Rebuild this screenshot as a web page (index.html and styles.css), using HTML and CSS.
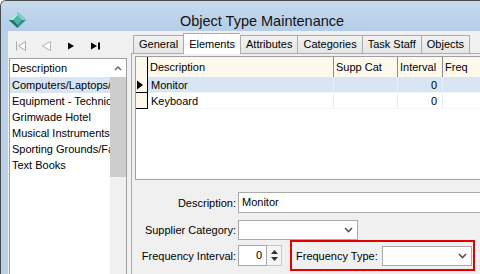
FILE: index.html
```html
<!DOCTYPE html>
<html lang="en">
<head>
  <meta charset="UTF-8" />
  <title>Object Type Maintenance</title>
  <link rel="stylesheet" href="styles.css">
</head>
<body>
  <div class="window">
    <div class="titlebar">
      <svg class="app-icon" width="17" height="16" viewBox="0 0 17 16">
        <polygon points="8.5,0 17,8 8.5,16 0,8" fill="#2e8f8a" />
        <polygon points="8.5,0 17,8 8.5,8" fill="#7fd3cc" />
        <polygon points="8.5,0 0,8 8.5,8" fill="#b6ece6" />
        <polygon points="0,8 8.5,16 8.5,8" fill="#1f6f6b" />
        <polygon points="8.5,3 13,8 8.5,13 4,8" fill="#4fb3ab" />
      </svg>
      <div class="title">Object Type Maintenance</div>
      <div></div>
    </div>

    <div class="client">
      <!-- left: navigator + list -->
      <div class="left">
        <div class="nav">
          <svg class="nav-btn" width="12" height="10" viewBox="0 0 12 10">
            <path d="M1.5 0.5v9" stroke="#a8a8a8" fill="none" />
            <path d="M10.5 0.5L3.5 5l7 4.5z" stroke="#a8a8a8" fill="#fff" />
          </svg>
          <svg class="nav-btn" width="12" height="10" viewBox="0 0 12 10">
            <path d="M10.5 0.5L2.5 5l8 4.5z" stroke="#b4b4b4" fill="#fff" />
          </svg>
          <svg class="nav-btn" width="12" height="10" viewBox="0 0 12 10">
            <path d="M3 1.5L9 5L3 8.5z" fill="#000" />
          </svg>
          <svg class="nav-btn" width="12" height="10" viewBox="0 0 12 10">
            <path d="M1 1.5L7 5L1 8.5z" fill="#000" />
            <rect x="8" y="1.5" width="2" height="7" fill="#000" />
          </svg>
        </div>
        <div class="list">
          <div class="list-items">
            <div class="list-head">Description</div>
            <div class="list-row selected">Computers/Laptops/Tablets</div>
            <div class="list-row">Equipment - Technical</div>
            <div class="list-row">Grimwade Hotel</div>
            <div class="list-row">Musical Instruments</div>
            <div class="list-row">Sporting Grounds/Facilities</div>
            <div class="list-row">Text Books</div>
          </div>
          <div class="vscroll">
            <div class="scroll-up">
              <svg width="8" height="5" viewBox="0 0 8 5"><path d="M1 4L4 1l3 3" stroke="#606060" stroke-width="1.4" fill="none" /></svg>
            </div>
            <div class="scroll-thumb"></div>
          </div>
        </div>
      </div>

      <div class="splitter"></div>

      <!-- right: tabs -->
      <div class="right">
        <div class="tabs">
          <div class="tab">General</div>
          <div class="tab active">Elements</div>
          <div class="tab">Attributes</div>
          <div class="tab">Categories</div>
          <div class="tab">Task Staff</div>
          <div class="tab">Objects</div>
        </div>
        <div class="tabpanel">
          <div class="grid">
            <div class="grid-row grid-head">
              <div class="ind"></div>
              <div class="cell">Description</div>
              <div class="cell">Supp Cat</div>
              <div class="cell">Interval</div>
              <div class="cell">Freq</div>
            </div>
            <div class="grid-row current">
              <div class="ind">
                <svg width="8" height="10" viewBox="0 0 8 10"><path d="M1 0.5L7 5L1 9.5z" fill="#000" /></svg>
              </div>
              <div class="cell">Monitor</div>
              <div class="cell"></div>
              <div class="cell num">0</div>
              <div class="cell"></div>
            </div>
            <div class="grid-row">
              <div class="ind"></div>
              <div class="cell">Keyboard</div>
              <div class="cell"></div>
              <div class="cell num">0</div>
              <div class="cell"></div>
            </div>
          </div>

          <div class="form">
            <div class="form-row row-desc">
              <label class="lbl">Description:</label>
              <div class="textbox wide">Monitor</div>
            </div>
            <div class="form-row row-supp">
              <label class="lbl">Supplier Category:</label>
              <div class="combo supp">
                <svg width="9" height="6" viewBox="0 0 9 6"><path d="M1 1l3.5 3.5L8 1" stroke="#555" stroke-width="1.6" fill="none" /></svg>
              </div>
            </div>
            <div class="form-row row-freq">
              <label class="lbl">Frequency Interval:</label>
              <div class="spinner">
                <div class="spin-text">0</div>
                <div class="spin-btns">
                  <svg width="7" height="4" viewBox="0 0 7 4"><path d="M0 4L3.5 0L7 4z" fill="#333" /></svg>
                  <svg width="7" height="4" viewBox="0 0 7 4"><path d="M0 0L3.5 4L7 0z" fill="#333" /></svg>
                </div>
              </div>
              <div class="highlight">
                <label class="lbl-inline">Frequency Type:</label>
                <div class="combo ftype">
                  <svg width="9" height="6" viewBox="0 0 9 6"><path d="M1 1l3.5 3.5L8 1" stroke="#555" stroke-width="1.6" fill="none" /></svg>
                </div>
              </div>
            </div>
          </div>
        </div>
      </div>
    </div>
  </div>
</body>
</html>
```

FILE: styles.css
```css
/* base */
* {
  box-sizing: border-box;
}
body {
  margin: 0;
  width: 480px;
  height: 274px;
  overflow: hidden;
  font-family: "Liberation Sans", Arial, sans-serif;
  font-size: 11px;
  color: #000;
  background: #fff;
}

/* window frame */
.window {
  width: 523px;
  height: 300px;
  display: flex;
  flex-direction: column;
  border-left: 1px solid #4b4b4b;
  border-top: 1px solid #4b4b4b;
  border-top-left-radius: 6px;
  background: #b9d1ea;
}
.titlebar {
  height: 30px;
  display: grid;
  grid-template-columns: 1fr auto 1fr;
  align-items: center;
  background: linear-gradient(to bottom, #c6daef, #b5cde7);
  border-top-left-radius: 5px;
}
.app-icon {
  margin: 7px 0 0 8px;
}
.title {
  font-size: 14.5px;
  color: #111;
  padding-top: 9px;
}

.client {
  flex: 1;
  margin-left: 7px;
  background: #f0f0f0;
  display: flex;
}

/* left side */
.left {
  width: 119px;
  display: flex;
  flex-direction: column;
}
.nav {
  height: 27px;
  display: flex;
  align-items: center;
  padding: 2px 0 0 7px;
  gap: 13px;
}
.list {
  flex: 1;
  margin-left: 1px;
  border: 1px solid #a0a0a0;
  border-bottom: none;
  background: #fff;
  display: flex;
}
.list-items {
  width: 100px;
  overflow: hidden;
  white-space: nowrap;
}
.list-head {
  height: 18px;
  line-height: 19px;
  padding-left: 2px;
}
.list-row {
  height: 16px;
  line-height: 16px;
  padding-left: 2px;
}
.list-row.selected {
  background: #d9e5f2;
}
.vscroll {
  width: 16px;
  background: #f0f0f0;
  display: flex;
  flex-direction: column;
}
.scroll-up {
  height: 18px;
  display: flex;
  align-items: center;
  justify-content: center;
  background: #fff;
}
.scroll-thumb {
  height: 100px;
  background: #cdcdcd;
}

.splitter {
  width: 4px;
}

/* right side: tabs */
.right {
  flex: 1;
  display: flex;
  flex-direction: column;
}
.tabs {
  height: 22px;
  display: flex;
  align-items: flex-end;
  padding-left: 2px;
}
.tab {
  height: 18px;
  line-height: 17px;
  padding: 0 5px;
  border: 1px solid #acacac;
  border-right: none;
  border-bottom: none;
  background: linear-gradient(to bottom, #f2f2f2, #e5e5e5);
}
.tab:last-child {
  border-right: 1px solid #acacac;
}
.tab.active {
  height: 21px;
  line-height: 20px;
  background: #fff;
  margin-bottom: -1px;
  position: relative;
}
.tabpanel {
  flex: 1;
  border-top: 1px solid #acacac;
  border-left: 1px solid #acacac;
  background: #f0f0f0;
}

/* data grid */
.grid {
  height: 124px;
  margin: 2px 0 0 3px;
  border: 1px solid #a0a0a0;
  border-right: none;
  background: #fff;
}
.grid-row {
  display: grid;
  grid-template-columns: 12px 186px 64px 45px 1fr;
  height: 16px;
  line-height: 16px;
}
.grid-row .cell {
  padding: 0 3px;
  border-right: 1px solid #e6edf5;
  border-bottom: 1px solid #f3f6fa;
  white-space: nowrap;
  overflow: hidden;
}
.grid-row .num {
  text-align: right;
  padding-right: 5px;
}
.grid-row .ind {
  background: #fdf8ec;
  border-right: 1px solid #000;
  border-bottom: 1px solid #000;
  display: flex;
  align-items: center;
}
.grid-head {
  height: 20px;
  line-height: 20px;
}
.grid-head .cell {
  background: #fdf8ec;
  border-right: 1px solid #8c8c8c;
  border-bottom: none;
  padding: 0 2px;
}
.grid-head .cell:first-of-type {
  padding-left: 3px;
}
.grid-head .ind {
  border-bottom: none;
}
.grid-row.current .cell {
  background: #d9e5f2;
}

/* edit form */
.form {
  padding-top: 12px;
}
.form-row {
  display: flex;
  align-items: center;
}
.lbl {
  width: 104px;
  text-align: right;
  margin-right: 2px;
}
.row-supp {
  margin-top: 7px;
}
.textbox {
  height: 21px;
  line-height: 19px;
  padding-left: 3px;
  border: 1px solid #a9a9a9;
  background: #fff;
}
.textbox.wide {
  width: 260px;
}
.combo {
  height: 20px;
  border: 1px solid #a9a9a9;
  background: #fff;
  display: flex;
  align-items: center;
  justify-content: flex-end;
  padding-right: 4px;
}
.combo.supp {
  width: 120px;
}
.combo.ftype {
  width: 90px;
}
.spinner {
  display: flex;
  height: 21px;
}
.spin-text {
  width: 29px;
  border: 1px solid #a9a9a9;
  background: #fff;
  text-align: right;
  line-height: 19px;
  padding-right: 4px;
}
.spin-btns {
  width: 15px;
  display: flex;
  flex-direction: column;
  justify-content: space-around;
  align-items: center;
  border: 1px solid #c8c8c8;
  border-left: none;
  background: #f4f4f4;
  padding: 2px 0;
}
.highlight {
  height: 31px;
  margin-left: 8px;
  border: 2px solid #e60000;
  display: flex;
  align-items: center;
  padding: 0 1px 0 4px;
}
.lbl-inline {
  margin-right: 4px;
}
```
